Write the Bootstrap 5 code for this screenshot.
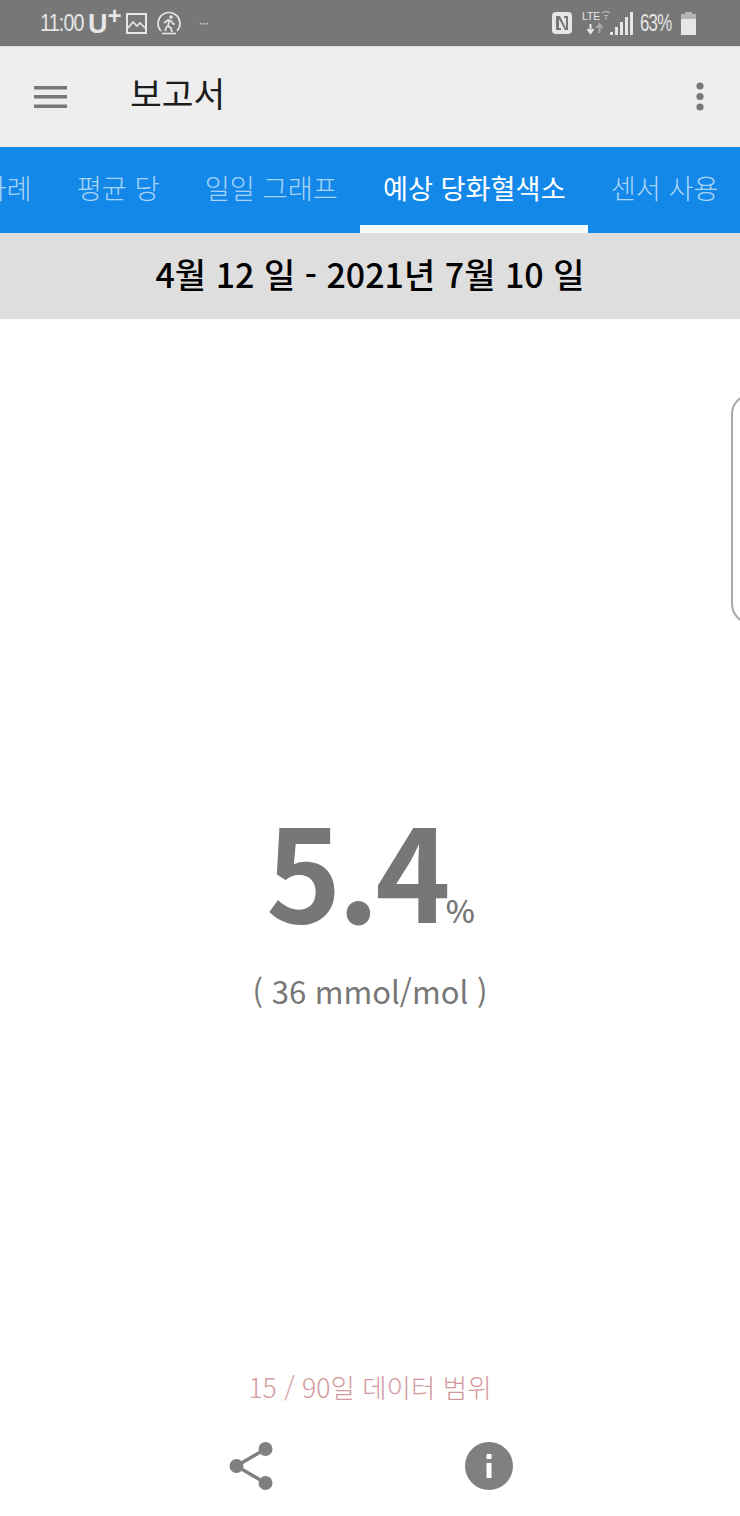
<!DOCTYPE html>
<html lang="ko">
<head>
    <meta charset="UTF-8">
    <meta name="viewport" content="width=device-width, initial-scale=1.0">
    <title>보고서</title>
    <link href="https://cdn.jsdelivr.net/npm/bootstrap@5.3.3/dist/css/bootstrap.min.css" rel="stylesheet"/>
    <style>
        html, body { height: 100%; }
        body { width: 740px; height: 1516px; overflow: hidden; background: #fff; font-family: "Noto Sans CJK KR", "Noto Sans", sans-serif; position: relative; }
        .status-bar { height: 46px; background: #777; color: #e6e6e6; padding: 0 44px 0 40px; }
        .status-time { font-family: "Liberation Sans", sans-serif; font-size: 24px; letter-spacing: -1px; width: 41px; white-space: nowrap; line-height: 46px; transform: scaleX(.82); transform-origin: left center; }
        .status-carrier { font-family: "Liberation Sans", sans-serif; font-weight: 700; font-size: 27px; line-height: 46px; margin-left: 7px; width: 34px; white-space: nowrap; position: relative; top: 1px; }
        .status-carrier sup { font-size: 24px; top: -9px; margin-left: 0; }
        .status-run { margin-left: 10px; }
        .status-dots { font-size: 11px; letter-spacing: 0; margin-left: 18px; line-height: 46px; }
        .status-lte { width: 28px; height: 30px; margin-left: 10px; }
        .status-pct { font-family: "Liberation Sans", sans-serif; font-size: 23px; letter-spacing: -1px; width: 37px; margin-left: 6px; white-space: nowrap; line-height: 46px; transform: scaleX(.73); transform-origin: left center; }
        .app-bar { height: 101px; background: #eee; border-top: 1px solid #ddd; padding-left: 34px; padding-right: 36px; }
        .app-title { font-size: 34.5px; color: #1c1c1c; margin-left: 63px; line-height: 1; font-weight: 400; margin-bottom: 10px; }
        .tab-strip { height: 86px; background: #1488e8; overflow: hidden; white-space: nowrap; }
        .tab-item { height: 86px; padding: 0 22.5px 5px; font-size: 27.3px; line-height: 1; color: #a9d4f7; flex: none; font-weight: 300; }
        .tab-cut { margin-left: -41px; }
        .tab-on { color: #fff; border-bottom: 8px solid #f5fafe; padding: 3px 22.5px 0; font-weight: 400; font-size: 27.2px; }
        .date-bar { height: 86px; background: #dedede; color: #000; font-size: 34px; font-weight: 500; padding-bottom: 6px; }
        .main-area { height: 1197px; color: #777; }
        .big-value { padding-top: 485px; line-height: 1; font-size: 128px; font-weight: 700; height: 620px; letter-spacing: -4px; padding-left: 1px; }
        .big-unit { font-size: 31px; font-weight: 500; letter-spacing: 0; margin-left: -1px; }
        .sub-value { font-size: 31px; font-weight: 400; line-height: 1; margin-top: 36px; }
        .range-note { font-size: 26.5px; font-weight: 300; color: #d39a9e; line-height: 1; margin-top: 368px; }
        .action-row { margin-top: 40px; gap: 188px; padding-left: 2px; }
        .side-handle { position: absolute; left: 731px; top: 394px; width: 40px; height: 230px; border: 2px solid #a8a8a8; border-radius: 26px; background: #fff; }
    </style>
</head>
<body>
    <div class="status-bar d-flex align-items-center">
        <span class="status-time">11:00</span>
        <span class="status-carrier">U<sup>+</sup></span>
        <svg width="21" height="21" viewBox="0 0 21 21" class="ms-1" fill="none" stroke="#e6e6e6" stroke-width="2"><rect x="1" y="1" width="19" height="19"/><path d="M2 15l5-6 4 4 3-3 5 5" stroke-width="1.6"/></svg>
        <svg width="24" height="24" viewBox="0 0 24 24" class="status-run" fill="none" stroke="#e6e6e6"><path d="M4 20a11 11 0 1 1 16 0" stroke-width="1.6"/><path d="M5 22.500h14" stroke-width="1.6"/><circle cx="14" cy="6" r="1.8" fill="#e6e6e6" stroke="none"/><path d="M7 12l4-3 3 1 2 3h2M12 10l-1 5 3 2 1 4M10 15l-2 5" stroke-width="1.7"/></svg>
        <span class="status-dots">···</span>
        <span class="flex-grow-1"></span>
        <svg width="20" height="22" viewBox="0 0 20 22"><rect width="20" height="22" rx="4" fill="#e6e6e6"/><path d="M4 4h4l6 12V6h-2V4h4v14h-3L7 7v9h2v2H4z" fill="#777"/></svg>
        <svg class="status-lte" viewBox="0 0 28 30"><text x="0" y="12" font-family="Liberation Sans, sans-serif" font-size="11" textLength="18" lengthAdjust="spacingAndGlyphs" fill="#e6e6e6">LTE</text><path d="M20 5a7 7 0 0 1 8 0M22 8a4 4 0 0 1 4 0" fill="none" stroke="#bbb" stroke-width="1.200"/><circle cx="24" cy="10.500" r="1" fill="#bbb"/><path d="M8.500 16v8M5.500 21l3 4 3-4" fill="none" stroke="#e6e6e6" stroke-width="2"/><path d="M17.500 25v-8M14.500 20l3-4 3 4" fill="none" stroke="#aaa" stroke-width="2"/></svg>
        <svg width="24" height="23" viewBox="0 0 24 23" fill="#e6e6e6"><rect x="0" y="20" width="3" height="3"/><rect x="5" y="15" width="3" height="8"/><rect x="10" y="10" width="3" height="13"/><rect x="15" y="5" width="3" height="18"/><rect x="20" y="0" width="3" height="23"/></svg>
        <span class="status-pct">63%</span>
        <svg width="15" height="23" viewBox="0 0 15 23" class="ms-1"><path d="M4 0h7v2h4v5H0V2h4z" fill="#b5b5b5"/><path d="M0 7h15v16H0z" fill="#e6e6e6"/></svg>
    </div>

    <div class="app-bar d-flex align-items-center">
        <svg width="33" height="22" viewBox="0 0 33 22" fill="#777"><rect width="33" height="3.500"/><rect y="9" width="33" height="3.500"/><rect y="18.500" width="33" height="3.500"/></svg>
        <h1 class="app-title">보고서</h1>
        <span class="flex-grow-1"></span>
        <svg width="8" height="30" viewBox="0 0 8 30" fill="#777"><circle cx="4" cy="4" r="3.600"/><circle cx="4" cy="14.500" r="3.600"/><circle cx="4" cy="25" r="3.600"/></svg>
    </div>

    <div class="tab-strip d-flex">
        <div class="tab-item tab-cut d-flex align-items-center">과례</div>
        <div class="tab-item d-flex align-items-center">평균 당</div>
        <div class="tab-item d-flex align-items-center">일일 그래프</div>
        <div class="tab-item tab-on d-flex align-items-center">예상 당화혈색소</div>
        <div class="tab-item d-flex align-items-center">센서 사용</div>
    </div>

    <div class="date-bar d-flex align-items-center justify-content-center">4월 12 일 - 2021년 7월 10 일</div>

    <div class="main-area d-flex flex-column align-items-center">
        <div class="big-value">5.4<span class="big-unit">%</span></div>
        <div class="sub-value">( 36 mmol/mol )</div>
        <div class="range-note">15 / 90일 데이터 범위</div>
        <div class="action-row d-flex align-items-center">
            <svg width="48" height="50" viewBox="0 0 48 50" fill="#808080" stroke="#808080"><circle cx="7.500" cy="25" r="7" stroke="none"/><circle cx="36.500" cy="8" r="7" stroke="none"/><circle cx="36.500" cy="42" r="7" stroke="none"/><path d="M36.500 8L7.500 25l29 17" fill="none" stroke-width="3.500"/></svg>
            <svg width="48" height="48" viewBox="0 0 48 48"><circle cx="24" cy="24" r="24" fill="#808080"/><rect x="21.500" y="12" width="5" height="5" fill="#fff"/><rect x="21.500" y="21" width="5" height="15" fill="#fff"/></svg>
        </div>
    </div>

    <div class="side-handle"></div>

    <script src="https://cdn.jsdelivr.net/npm/bootstrap@5.3.3/dist/js/bootstrap.bundle.min.js"></script>
</body>
</html>
